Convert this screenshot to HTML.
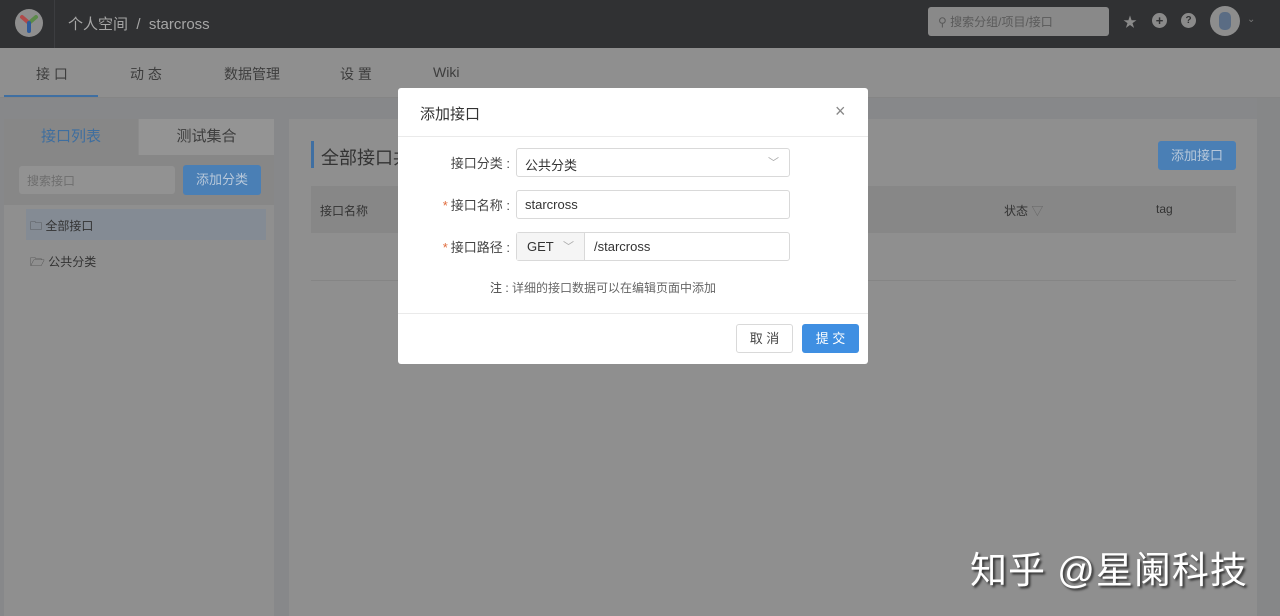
<!DOCTYPE html>
<html><head><meta charset="utf-8"><style>
*{box-sizing:border-box;margin:0;padding:0}
body{width:1280px;height:616px;overflow:hidden;background:#87888a;font-family:"Liberation Sans","Noto Sans CJK SC",sans-serif;font-size:13px;color:#3a3a3a;position:relative}
.abs{position:absolute}
.hdr{left:0;top:0;width:1280px;height:48px;background:#303133}
.nav{left:0;top:48px;width:1280px;height:50px;background:#8f8f8f;border-bottom:1px solid #858585}
.nav span{position:absolute;top:16px;font-size:14px;color:#3d3d3d}
.btn{background:#4a7fb5;color:#b8c8da;border-radius:3px;font-size:13px;text-align:center}
.dlg{left:398px;top:88px;width:470px;height:276px;background:#fff;border-radius:3px}
.lbl{position:absolute;width:112px;text-align:right;font-size:13px;color:#444}
.lbl b{color:#e06b3c;font-weight:normal;margin-right:3px}
.inp{position:absolute;left:118px;width:274px;height:29px;border:1px solid #d9d9d9;border-radius:3px;font-size:13px;padding:6px 8px;color:#333}
</style></head><body>
<div class="abs hdr">
 <div class="abs" style="left:54px;top:0;width:1px;height:48px;background:#3c3d40"></div>
 <svg class="abs" style="left:14px;top:8px" width="30" height="30" viewBox="0 0 30 30"><circle cx="15" cy="15" r="14" fill="#8e8e8e"/><path d="M8 9 L15 15" stroke="#b04a4a" stroke-width="4" stroke-linecap="round"/><path d="M22 9 L15 15" stroke="#5c8a4a" stroke-width="4" stroke-linecap="round"/><path d="M15 15 L15 23" stroke="#2e5a9a" stroke-width="4" stroke-linecap="round"/></svg>
 <div class="abs" style="left:68px;top:13px;font-size:15px;color:#a6a6a6">个人空间 &nbsp;/&nbsp; starcross</div>
 <div class="abs" style="left:928px;top:7px;width:181px;height:29px;background:#898989;border-radius:3px"></div>
 <div class="abs" style="left:938px;top:13px;font-size:12px;color:#5a5a5a">⚲ 搜索分组/项目/接口</div>
 <div class="abs" style="left:1123px;top:12px;font-size:14px;color:#8a8a8a">★</div>
 <div class="abs" style="left:1152px;top:13px;width:15px;height:15px;border-radius:50%;background:#8a8a8a;color:#303133;font-size:13px;line-height:15px;text-align:center;font-weight:bold">+</div>
 <div class="abs" style="left:1181px;top:13px;width:15px;height:15px;border-radius:50%;background:#8a8a8a;color:#303133;font-size:10px;line-height:15px;text-align:center;font-weight:bold">?</div>
 <div class="abs" style="left:1210px;top:6px;width:30px;height:30px;border-radius:50%;background:#8d8d8d"><div class="abs" style="left:9px;top:6px;width:12px;height:18px;background:#5a6c84;border-radius:5px"></div></div>
 <div class="abs" style="left:1247px;top:14px;font-size:10px;color:#777">⌄</div>
</div>
<div class="abs nav">
 <span style="left:36px">接 口</span><span style="left:130px">动 态</span><span style="left:224px">数据管理</span><span style="left:340px">设 置</span><span style="left:433px">Wiki</span>
 <div class="abs" style="left:4px;top:47px;width:94px;height:2px;background:#3f6fa2"></div>
</div>
<div class="abs" style="left:4px;top:119px;width:270px;height:497px;background:#8c8c8c"></div>
<div class="abs" style="left:4px;top:119px;width:134px;height:36px;background:#878787;color:#3e6e9f;font-size:15px;text-align:center;line-height:36px">接口列表</div>
<div class="abs" style="left:139px;top:119px;width:135px;height:36px;background:#949494;color:#3d3d3d;font-size:15px;text-align:center;line-height:36px">测试集合</div>
<div class="abs" style="left:4px;top:155px;width:270px;height:50px;background:#878787"></div>
<div class="abs" style="left:19px;top:166px;width:156px;height:28px;background:#929292;border-radius:3px;color:#6e6e6e;font-size:12px;padding:6px 8px">搜索接口</div>
<div class="abs btn" style="left:183px;top:165px;width:78px;height:30px;line-height:30px">添加分类</div>
<div class="abs" style="left:4px;top:205px;width:270px;height:411px;background:#8f8f8f"></div>
<div class="abs" style="left:26px;top:209px;width:240px;height:31px;background:#848b94"></div>
<div class="abs" style="left:30px;top:217px;font-size:12px;color:#333">🗀 全部接口</div>
<div class="abs" style="left:30px;top:253px;font-size:12px;color:#333">🗁 公共分类</div>
<div class="abs" style="left:289px;top:119px;width:968px;height:497px;background:#8f8f8f"></div>
<div class="abs" style="left:1257px;top:98px;width:23px;height:518px;background:#868788"></div>
<div class="abs" style="left:311px;top:141px;width:3px;height:27px;background:#3f6fa2"></div>
<div class="abs" style="left:321px;top:144px;font-size:18px;color:#333">全部接口共</div>
<div class="abs btn" style="left:1158px;top:141px;width:78px;height:29px;line-height:29px">添加接口</div>
<div class="abs" style="left:311px;top:186px;width:925px;height:47px;background:#878787"></div>
<div class="abs" style="left:320px;top:202px;font-size:12px;color:#333">接口名称</div>
<div class="abs" style="left:1004px;top:202px;font-size:12px;color:#333">状态 <span style="color:#666">▽</span></div>
<div class="abs" style="left:1156px;top:202px;font-size:12px;color:#333">tag</div>
<div class="abs" style="left:311px;top:280px;width:925px;height:1px;background:#858585"></div>
<div class="abs" style="left:970px;top:540px;font-size:37px;color:#fff;text-shadow:2px 2px 2px #333;letter-spacing:1px">知乎 @星阑科技</div>

<div class="abs dlg">
 <div class="abs" style="left:22px;top:15px;font-size:15px;color:#333">添加接口</div>
 <div class="abs" style="left:437px;top:13px;font-size:18px;color:#888">×</div>
 <div class="abs" style="left:0;top:48px;width:470px;height:1px;background:#eaeaea"></div>
 <div class="lbl" style="top:65px">接口分类 :</div>
 <div class="inp" style="top:60px">公共分类<span style="position:absolute;right:10px;top:5px;color:#aaa;font-size:11px">﹀</span></div>
 <div class="lbl" style="top:107px"><b>*</b>接口名称 :</div>
 <div class="inp" style="top:102px">starcross</div>
 <div class="lbl" style="top:149px"><b>*</b>接口路径 :</div>
 <div class="inp" style="top:144px;padding:0">
  <div class="abs" style="left:0;top:0;width:68px;height:27px;background:#f5f5f5;border-right:1px solid #d9d9d9;padding:6px 10px">GET<span style="position:absolute;right:10px;top:5px;color:#aaa;font-size:11px">﹀</span></div>
  <div class="abs" style="left:77px;top:6px">/starcross</div>
 </div>
 <div class="abs" style="left:92px;top:191px;font-size:12px;color:#666"><span style="color:#444">注 :</span> 详细的接口数据可以在编辑页面中添加</div>
 <div class="abs" style="left:0;top:225px;width:470px;height:1px;background:#eaeaea"></div>
 <div class="abs" style="left:338px;top:236px;width:57px;height:29px;border:1px solid #d9d9d9;border-radius:3px;text-align:center;line-height:27px;color:#444">取 消</div>
 <div class="abs" style="left:404px;top:236px;width:57px;height:29px;background:#3f8fe2;border-radius:3px;text-align:center;line-height:29px;color:#fff">提 交</div>
</div>
</body></html>
